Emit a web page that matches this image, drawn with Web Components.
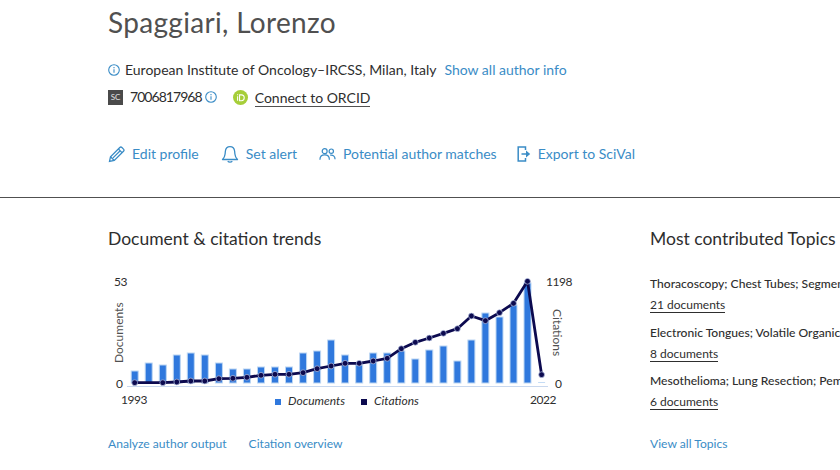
<!DOCTYPE html>
<html lang="en">
<head>
<meta charset="utf-8">
<title>Spaggiari, Lorenzo</title>
<style>
  html, body { margin: 0; height: 470px; width: 840px; overflow: hidden; background: #fff; }
  body { font-family: Lato, "Liberation Sans", sans-serif; color: #2e2e2e; }
</style>
</head>
<body>
<author-page></author-page>

<template id="icon-info">
  <svg width="12" height="12" viewBox="0 0 12 12" fill="none" stroke="#3a8cc6" stroke-width="1.1"><circle cx="6" cy="6" r="5.3"/><path d="M6 5.2v3.6M6 3v1.2"/></svg>
</template>

<script>
// Enlace azul con icono a la izquierda
class ActionLink extends HTMLElement {
  constructor() {
    super();
    this.attachShadow({ mode: "open" });
    this.shadowRoot.innerHTML = `
      <style>
        :host { display: inline-flex; align-items: center; gap: 7px; color: #3a8cc6; font-size: 14px; line-height: 20px; white-space: nowrap; }
        ::slotted(svg) { display: block; flex: none; }
      </style>
      <slot name="icon"></slot><slot></slot>`;
  }
}
customElements.define("action-link", ActionLink);

// Cabecera del autor
class AuthorHeader extends HTMLElement {
  constructor() {
    super();
    this.attachShadow({ mode: "open" });
    const info = document.getElementById("icon-info").innerHTML;
    this.shadowRoot.innerHTML = `
      <style>
        :host { display: block; padding: 4px 0 0 108px; height: 193px; border-bottom: 1px solid #505050; }
        h1 { margin: 0; font-size: 28px; line-height: 36px; font-weight: 400; color: #505050; letter-spacing: .32px; white-space: nowrap; }
        .row { display: flex; align-items: center; font-size: 14px; line-height: 20px; white-space: nowrap; }
        .row svg { display: block; flex: none; }
        .aff { margin-top: 20px; gap: 5px; }
        .aff a { color: #3a8cc6; margin-left: 3px; }
        .ids { margin-top: 7px; }
        .sc { width: 15px; height: 15px; background: #4a4a4a; color: #e4e4e4; font-size: 8px; line-height: 15px; text-align: center; margin-right: 7px; }
        .ids .num { margin-right: 3px; letter-spacing: -.95px; }
        .orcid { margin-left: 16px; margin-right: 7px; }
        .connect { border-bottom: 1px solid #505050; line-height: 17px; margin-top: 2px; }
        .actions { display: flex; margin-top: 37px; gap: 22px; }
      </style>
      <h1>Spaggiari, Lorenzo</h1>
      <div class="row aff">${info}<span>European Institute of Oncology–IRCSS, Milan, Italy</span><a>Show all author info</a></div>
      <div class="row ids">
        <span class="sc">SC</span><span class="num">7006817968</span>${info}
        <svg class="orcid" width="15" height="15" viewBox="0 0 16 16"><circle cx="8" cy="8" r="8" fill="#a6ce39"/><path d="M4.900 6.600v4.800M4.900 4.600v.9" stroke="#fff" stroke-width="1.100" fill="none"/><path d="M7 5.200v6.200h2c1.900 0 3-1.300 3-3.100s-1.100-3.100-3-3.100z" stroke="#fff" stroke-width="1.100" fill="none"/></svg>
        <span class="connect">Connect to ORCID</span>
      </div>
      <div class="actions"><slot></slot></div>`;
  }
}
customElements.define("author-header", AuthorHeader);

// Grafico de documentos y citas
class TrendsChart extends HTMLElement {
  constructor() {
    super();
    this.attachShadow({ mode: "open" });
    const bars = [371,363,365,355,353,355,363,369,369,367,367,367,353,351,340,355,365,353,353,351,359,350,346,361,340,313,317,305,283,382];
    const line = [382.7,382.7,382.7,382,381,381,378.7,378.3,377.3,375.3,374.3,374.3,372.7,368.7,366,363.3,363.3,361,358.3,348.7,342.3,338,333.3,328.7,316,320.7,312.7,303.3,281.3,374.7];
    const x = (k) => (134.7 + k * 14.03).toFixed(1);
    const rects = bars.map((top, k) => {
      const light = k === 29;
      return `<rect x="${(x(k) - 3.5).toFixed(1)}" y="${top}" width="7" height="${383 - top}" fill="${light ? "#c5dcf5" : "#2f78dd"}" stroke="#bcd6f3" stroke-width="${light ? 0 : 1}"/>`;
    }).join("");
    const pts = line.map((y, k) => `${x(k)},${y}`).join(" ");
    const dots = line.map((y, k) => k === 1 ? "" : `<circle cx="${x(k)}" cy="${y}" r="2.900" fill="#0c0a4f" stroke="#b9c6e6" stroke-width=".7"/>`).join("");
    this.shadowRoot.innerHTML = `
      <style>
        :host { display: block; width: 480px; height: 140px; }
        svg { display: block; }
        text { font-family: Lato, "Liberation Sans", sans-serif; font-size: 12px; fill: #2e2e2e; }
        .side { fill: #505050; }
        .num { letter-spacing: -.5px; }
        .it { font-style: italic; }
      </style>
      <svg width="480" height="140" viewBox="100 272 480 140">
        <line x1="127" y1="386.500" x2="548" y2="386.500" stroke="#c9d8ee"/>
        ${rects}
        <polyline points="${pts}" fill="none" stroke="#0c0a4f" stroke-width="2.800" stroke-linejoin="round"/>
        ${dots}
        <text x="114" y="286" class="num">53</text>
        <text x="116" y="388">0</text>
        <text x="546" y="286" class="num">1198</text>
        <text x="555" y="388">0</text>
        <text transform="translate(123 363) rotate(-90)" class="side">Documents</text>
        <text transform="translate(553 309) rotate(90)" class="side">Citations</text>
        <text x="121" y="404" class="num">1993</text>
        <text x="530" y="404" class="num">2022</text>
        <rect x="275" y="399" width="6" height="6" fill="#2f78dd"/>
        <text x="288" y="405" class="it">Documents</text>
        <rect x="361" y="399" width="6" height="6" fill="#0c0a4f"/>
        <text x="374" y="405" class="it">Citations</text>
      </svg>`;
  }
}
customElements.define("trends-chart", TrendsChart);

// Columna izquierda
class TrendsCard extends HTMLElement {
  constructor() {
    super();
    this.attachShadow({ mode: "open" });
    this.shadowRoot.innerHTML = `
      <style>
        :host { display: block; width: 542px; flex: none; }
        h2 { margin: 0; font-size: 17.5px; line-height: 24px; font-weight: 400; color: #2e2e2e; white-space: nowrap; }
        trends-chart { margin: 21px 0 0 -8px; }
        .links { display: flex; gap: 22px; margin-top: 23px; font-size: 12.1px; line-height: 18px; color: #3a8cc6; white-space: nowrap; }
      </style>
      <h2>Document &amp; citation trends</h2>
      <trends-chart></trends-chart>
      <div class="links"><a>Analyze author output</a><a>Citation overview</a></div>`;
  }
}
customElements.define("trends-card", TrendsCard);

// Un tema con su numero de documentos
class TopicItem extends HTMLElement {
  constructor() {
    super();
    this.attachShadow({ mode: "open" });
    this.shadowRoot.innerHTML = `
      <style>
        :host { display: block; font-size: 12.1px; white-space: nowrap; margin-bottom: 10.5px; }
        .title { line-height: 18px; font-weight: 500; color: #2e2e2e; }
        .count { display: inline-block; margin-top: 5px; line-height: 14px; border-bottom: 1px solid #2e2e2e; font-size: 12px; color: #2e2e2e; }
      </style>
      <div class="title"><slot></slot></div>
      <span class="count">${this.getAttribute("count")} documents</span>`;
  }
}
customElements.define("topic-item", TopicItem);

class TopicsCard extends HTMLElement {
  constructor() {
    super();
    this.attachShadow({ mode: "open" });
    this.shadowRoot.innerHTML = `
      <style>
        :host { display: block; white-space: nowrap; }
        h2 { margin: 0 0 24px; font-size: 17.5px; line-height: 24px; font-weight: 400; color: #2e2e2e; }
        .all { display: block; margin-top: 25px; font-size: 12.1px; line-height: 18px; color: #3a8cc6; }
      </style>
      <h2>Most contributed Topics 2018–2022</h2>
      <slot></slot>
      <a class="all">View all Topics</a>`;
  }
}
customElements.define("topics-card", TopicsCard);

// Pagina completa
class AuthorPage extends HTMLElement {
  constructor() {
    super();
    this.attachShadow({ mode: "open" });
    const pencil = `<svg slot="icon" width="17" height="17" viewBox="0 0 17 17" fill="none" stroke="#3a8cc6" stroke-width="1.300"><path d="M1.500 15.500l1-4.800L11.800 1.500a1.500 1.500 0 0 1 2.100 0l1.600 1.600a1.500 1.500 0 0 1 0 2.100L6.300 14.500z"/><path d="M2.500 10.700l3.800 3.800M10.400 3l3.600 3.600M5 11.900l7.200-7.200"/></svg>`;
    const bell = `<svg slot="icon" width="18" height="18" viewBox="0 0 18 18" fill="none" stroke="#3a8cc6" stroke-width="1.300" stroke-linejoin="round"><path d="M1.500 14.500c1.700-1.600 2.400-3 2.600-5.500l.3-3C4.700 3.400 6.600 1.600 9 1.600s4.300 1.800 4.600 4.400l.3 3c.2 2.500.9 3.900 2.600 5.500z"/><path d="M6.700 16.300c.6.600 1.400.9 2.300.9s1.700-.3 2.300-.9"/></svg>`;
    const people = `<svg slot="icon" width="17" height="14" viewBox="0 0 18 14" fill="none" stroke="#3a8cc6" stroke-width="1.300"><circle cx="6" cy="4" r="2.600"/><circle cx="13" cy="4" r="2.300"/><path d="M1 13c0-3.200 2-5 5-5s5 1.800 5 5M11.800 8.200c3-.6 5.200 1.300 5.200 4.300"/></svg>`;
    const exportIcon = `<svg slot="icon" width="14" height="16" viewBox="0 0 14 16" fill="none" stroke="#3a8cc6" stroke-width="1.500"><path d="M8.500 4V1H1.200v14h7.300v-3"/><path d="M4.500 8h5"/><path d="M9 4.600L13.200 8 9 11.400z" fill="#3a8cc6" stroke="none"/></svg>`;
    this.shadowRoot.innerHTML = `
      <style>
        :host { display: block; }
        .columns { display: flex; padding: 29px 0 0 108px; }
        .last { margin-left: -2px; }
      </style>
      <author-header>
        <action-link>${pencil}Edit profile</action-link>
        <action-link>${bell}Set alert</action-link>
        <action-link>${people}Potential author matches</action-link>
        <action-link class="last">${exportIcon}Export to SciVal</action-link>
      </author-header>
      <div class="columns">
        <trends-card></trends-card>
        <topics-card>
          <topic-item count="21">Thoracoscopy; Chest Tubes; Segmentectomy</topic-item>
          <topic-item count="8">Electronic Tongues; Volatile Organic Compounds; Breath Tests</topic-item>
          <topic-item count="6">Mesothelioma; Lung Resection; Pemetrexed</topic-item>
        </topics-card>
      </div>`;
  }
}
customElements.define("author-page", AuthorPage);
</script>
</body>
</html>
